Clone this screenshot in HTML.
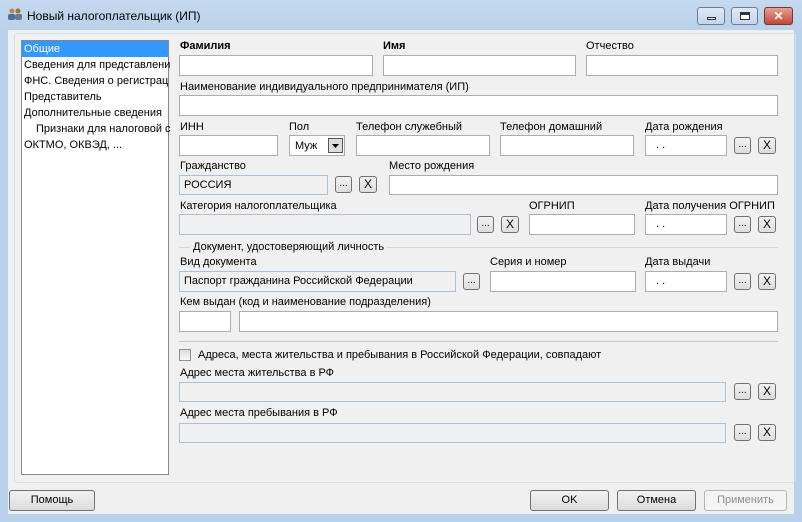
<!DOCTYPE html>
<html><head><meta charset="utf-8"><style>
*{box-sizing:border-box;margin:0;padding:0}
body{width:802px;height:522px;overflow:hidden;background:#b9d1ea;font-family:"Liberation Sans",sans-serif;font-size:11px;color:#000;position:relative}
.a{position:absolute}
.title{left:0;top:0;width:802px;height:30px;background:linear-gradient(#c5d9ef,#b9d1ea)}
.client{left:8px;top:30px;width:786px;height:484px;background:#f0f0f0}
.panel{left:14px;top:33px;width:782px;height:450px;border:1px solid #d5dfe5;border-radius:3px}
.in{background:#fff;border:1px solid #abadb3}
.g{background:#f0f0f0;border:1px solid #a8c1dc}
.lb{white-space:nowrap}
.b{background:linear-gradient(#f2f2f2,#dddddd);border:1px solid #707070;border-radius:3px;text-align:center;font-size:10px;line-height:14px}
.bb{background:linear-gradient(#f2f2f2,#dcdcdc);border:1px solid #707070;border-radius:3px;text-align:center;line-height:19px}
.list div{height:16px;line-height:16px;padding-left:2px;white-space:nowrap}
.tb{border:1px solid #6d7d91;border-radius:3px;background:linear-gradient(#dfe9f5,#c4d5ea)}
</style></head><body>
<div class="a title"></div>
<div class="a" style="left:8px;top:8px;width:14px;height:12px">
<svg width="14" height="12"><circle cx="4" cy="3" r="2.5" fill="#c8864b"/><circle cx="10" cy="3" r="2.5" fill="#a07040"/><rect x="0" y="6" width="7" height="6" rx="2" fill="#4a6fa5"/><rect x="7" y="6" width="7" height="6" rx="2" fill="#6a7a8a"/></svg></div>
<div class="a lb" style="left:27px;top:9px;font-size:12px">Новый налогоплательщик (ИП)</div>
<div class="a tb" style="left:697px;top:7px;width:28px;height:18px"><div class="a" style="left:9px;top:9px;width:9px;height:3px;background:#fff;border:1px solid #333"></div></div>
<div class="a tb" style="left:731px;top:7px;width:27px;height:18px"><div class="a" style="left:8px;top:4px;width:10px;height:8px;border:1px solid #333;border-top:3px solid #333;background:#fff"></div></div>
<div class="a" style="left:764px;top:7px;width:29px;height:18px;border:1px solid #6d3a32;border-radius:3px;background:linear-gradient(#e8a090,#c4463a);color:#fff;font-weight:bold;text-align:center;line-height:16px;font-size:12px">✕</div>
<div class="a client"></div>
<div class="a panel"></div>
<div class="a list" style="left:21px;top:40px;width:148px;height:435px;background:#fff;border:1px solid #828790;padding-top:0">
<div style="background:#3399ff;color:#fff">Общие</div>
<div>Сведения для представлени</div>
<div>ФНС. Сведения о регистрац</div>
<div>Представитель</div>
<div>Дополнительные сведения</div>
<div style="padding-left:14px">Признаки для налоговой с</div>
<div>ОКТМО, ОКВЭД, ...</div>
</div>

<div class="a lb" style="left:180px;top:40px;font-weight:bold">Фамилия</div>
<div class="a lb" style="left:383px;top:40px;font-weight:bold">Имя</div>
<div class="a lb" style="left:586px;top:40px">Отчество</div>
<div class="a in" style="left:179px;top:55px;width:194px;height:21px"></div>
<div class="a in" style="left:383px;top:55px;width:193px;height:21px"></div>
<div class="a in" style="left:586px;top:55px;width:192px;height:21px"></div>

<div class="a lb" style="left:180px;top:81px">Наименование индивидуального предпринимателя (ИП)</div>
<div class="a in" style="left:179px;top:95px;width:599px;height:21px"></div>

<div class="a lb" style="left:180px;top:121px">ИНН</div>
<div class="a lb" style="left:289px;top:121px">Пол</div>
<div class="a lb" style="left:356px;top:121px">Телефон служебный</div>
<div class="a lb" style="left:500px;top:121px">Телефон домашний</div>
<div class="a lb" style="left:645px;top:121px">Дата рождения</div>
<div class="a in" style="left:179px;top:135px;width:99px;height:21px"></div>
<div class="a in" style="left:289px;top:135px;width:56px;height:21px;padding:4px 0 0 5px">Муж
<div class="a" style="left:38px;top:2px;width:15px;height:15px;border:1px solid #555;background:#ddd"><svg width="13" height="13"><path d="M3 5h7l-3.5 4z" fill="#000"/></svg></div></div>
<div class="a in" style="left:356px;top:135px;width:134px;height:21px"></div>
<div class="a in" style="left:500px;top:135px;width:134px;height:21px"></div>
<div class="a in" style="left:645px;top:135px;width:82px;height:21px;padding:3px 0 0 10px">. .</div>
<div class="a b" style="left:734px;top:137px;width:17px;height:17px">...</div>
<div class="a b" style="left:758px;top:137px;width:18px;height:17px;font-size:12px">X</div>

<div class="a lb" style="left:180px;top:160px">Гражданство</div>
<div class="a lb" style="left:389px;top:160px">Место рождения</div>
<div class="a g" style="left:179px;top:175px;width:149px;height:20px;padding:3px 0 0 4px">РОССИЯ</div>
<div class="a b" style="left:335px;top:176px;width:17px;height:17px">...</div>
<div class="a b" style="left:359px;top:176px;width:18px;height:17px;font-size:12px">X</div>
<div class="a in" style="left:389px;top:175px;width:389px;height:20px"></div>

<div class="a lb" style="left:180px;top:200px">Категория налогоплательщика</div>
<div class="a lb" style="left:529px;top:200px">ОГРНИП</div>
<div class="a lb" style="left:645px;top:200px">Дата получения ОГРНИП</div>
<div class="a g" style="left:179px;top:214px;width:292px;height:21px"></div>
<div class="a b" style="left:477px;top:216px;width:17px;height:17px">...</div>
<div class="a b" style="left:501px;top:216px;width:18px;height:17px;font-size:12px">X</div>
<div class="a in" style="left:529px;top:214px;width:106px;height:21px"></div>
<div class="a in" style="left:645px;top:214px;width:82px;height:21px;padding:3px 0 0 10px">. .</div>
<div class="a b" style="left:734px;top:216px;width:17px;height:17px">...</div>
<div class="a b" style="left:758px;top:216px;width:18px;height:17px;font-size:12px">X</div>

<div class="a" style="left:179px;top:247px;width:599px;height:1px;background:#d5d5d5"></div>
<div class="a lb" style="left:190px;top:241px;background:#f0f0f0;padding:0 3px">Документ, удостоверяющий личность</div>
<div class="a lb" style="left:180px;top:256px">Вид документа</div>
<div class="a lb" style="left:490px;top:256px">Серия и номер</div>
<div class="a lb" style="left:645px;top:256px">Дата выдачи</div>
<div class="a g" style="left:179px;top:271px;width:277px;height:21px;padding:3px 0 0 4px">Паспорт гражданина Российской Федерации</div>
<div class="a b" style="left:463px;top:273px;width:17px;height:17px">...</div>
<div class="a in" style="left:490px;top:271px;width:146px;height:21px"></div>
<div class="a in" style="left:645px;top:271px;width:82px;height:21px;padding:3px 0 0 10px">. .</div>
<div class="a b" style="left:734px;top:273px;width:17px;height:17px">...</div>
<div class="a b" style="left:758px;top:273px;width:18px;height:17px;font-size:12px">X</div>

<div class="a lb" style="left:180px;top:296px">Кем выдан (код и наименование подразделения)</div>
<div class="a in" style="left:179px;top:311px;width:52px;height:21px"></div>
<div class="a in" style="left:239px;top:311px;width:539px;height:21px"></div>

<div class="a" style="left:179px;top:341px;width:599px;height:1px;background:#c8c8c8"></div>
<div class="a" style="left:179px;top:349px;width:12px;height:12px;border:1px solid #8f8f8f;background:linear-gradient(#ddd,#f8f8f8)"></div>
<div class="a lb" style="left:198px;top:349px">Адреса, места жительства и пребывания в Российской Федерации, совпадают</div>

<div class="a lb" style="left:180px;top:367px">Адрес места жительства в РФ</div>
<div class="a g" style="left:179px;top:382px;width:547px;height:20px"></div>
<div class="a b" style="left:734px;top:383px;width:17px;height:17px">...</div>
<div class="a b" style="left:758px;top:383px;width:18px;height:17px;font-size:12px">X</div>
<div class="a lb" style="left:180px;top:407px">Адрес места пребывания в РФ</div>
<div class="a g" style="left:179px;top:423px;width:547px;height:20px"></div>
<div class="a b" style="left:734px;top:424px;width:17px;height:17px">...</div>
<div class="a b" style="left:758px;top:424px;width:18px;height:17px;font-size:12px">X</div>

<div class="a bb" style="left:9px;top:490px;width:86px;height:21px">Помощь</div>
<div class="a bb" style="left:530px;top:490px;width:79px;height:21px">OK</div>
<div class="a bb" style="left:617px;top:490px;width:79px;height:21px">Отмена</div>
<div class="a bb" style="left:704px;top:490px;width:83px;height:21px;color:#8d8d8d;border-color:#b5b5b5;background:#f4f4f4">Применить</div>
</body></html>
